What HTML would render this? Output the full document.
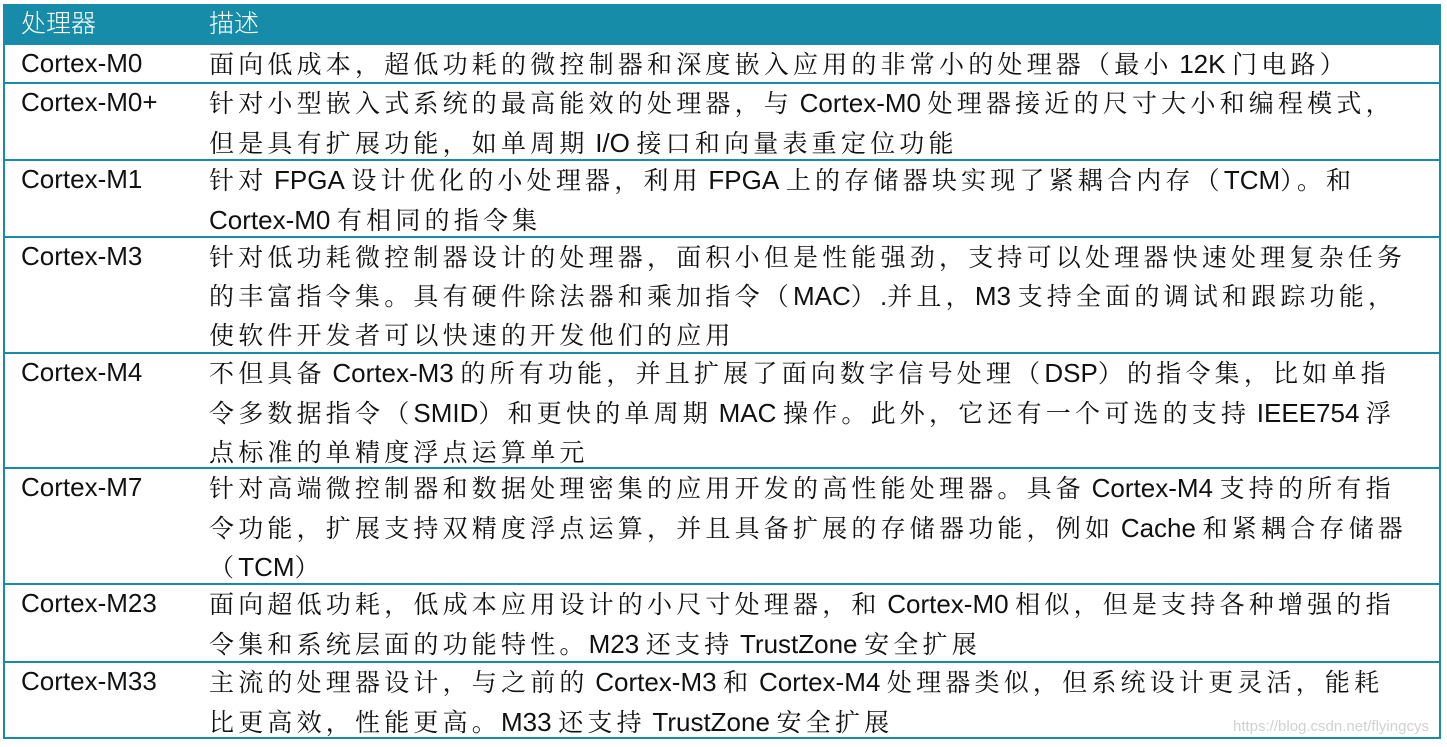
<!DOCTYPE html>
<html><head><meta charset="utf-8"><style>
body{margin:0;width:1447px;height:747px;background:#fff;position:relative;overflow:hidden;font-family:"Liberation Sans","Noto Sans CJK SC",sans-serif;}
.tbl{position:absolute;left:3px;top:4px;width:1434px;height:733px;border:2px solid #1a8aa8;border-top:none;}
.hdr{position:absolute;left:0;top:0;width:1434px;height:40px;background:#178ca9;color:#fff;font-family:"Noto Sans CJK SC",sans-serif;font-size:25px;line-height:40px;font-weight:300}
.hdr span{position:absolute;top:-2px}
.row{position:absolute;left:0;width:1434px;border-top:2px solid #1a8aa8;}
.c1{position:absolute;left:16px;top:-1px;font-size:26px;line-height:38px;color:#111}
.c2{position:absolute;left:204px;top:-1px;font-family:"Noto Serif CJK SC","Liberation Serif",serif;font-size:25px;line-height:38.5px;color:#111;letter-spacing:4.2px;word-spacing:-4px;white-space:nowrap}
.c2 b{font-family:"Liberation Sans",sans-serif;font-weight:normal;letter-spacing:0;font-size:26px}
.wm{position:absolute;left:1233px;top:718px;font-size:15px;color:#d0d0d0;font-family:"Liberation Sans",sans-serif}
</style></head><body>
<div class="tbl">
<div class="hdr"><span style="left:16px">处理器</span><span style="left:204px">描述</span></div>
<div class="row" style="top:39px;height:39px"><div class="c1">Cortex-M0</div><div class="c2">面向低成本，超低功耗的微控制器和深度嵌入应用的非常小的处理器（最小 <b>12K</b> 门电路）</div></div>
<div class="row" style="top:78px;height:76px"><div class="c1">Cortex-M0+</div><div class="c2">针对小型嵌入式系统的最高能效的处理器，与 <b>Cortex-M0</b> 处理器接近的尺寸大小和编程模式，<br>但是具有扩展功能，如单周期 <b>I/O</b> 接口和向量表重定位功能</div></div>
<div class="row" style="top:155px;height:76px"><div class="c1">Cortex-M1</div><div class="c2">针对 <b>FPGA</b> 设计优化的小处理器，利用 <b>FPGA</b> 上的存储器块实现了紧耦合内存（<b>TCM</b>）。和<br><b>Cortex-M0</b> 有相同的指令集</div></div>
<div class="row" style="top:232px;height:114px"><div class="c1">Cortex-M3</div><div class="c2">针对低功耗微控制器设计的处理器，面积小但是性能强劲，支持可以处理器快速处理复杂任务<br>的丰富指令集。具有硬件除法器和乘加指令（<b>MAC</b>）<b>.</b>并且，<b>M3</b> 支持全面的调试和跟踪功能，<br>使软件开发者可以快速的开发他们的应用</div></div>
<div class="row" style="top:348px;height:114px"><div class="c1">Cortex-M4</div><div class="c2">不但具备 <b>Cortex-M3</b> 的所有功能，并且扩展了面向数字信号处理（<b>DSP</b>）的指令集，比如单指<br>令多数据指令（<b>SMID</b>）和更快的单周期 <b>MAC</b> 操作。此外，它还有一个可选的支持 <b>IEEE754</b> 浮<br>点标准的单精度浮点运算单元</div></div>
<div class="row" style="top:463px;height:114px"><div class="c1">Cortex-M7</div><div class="c2">针对高端微控制器和数据处理密集的应用开发的高性能处理器。具备 <b>Cortex-M4</b> 支持的所有指<br>令功能，扩展支持双精度浮点运算，并且具备扩展的存储器功能，例如 <b>Cache</b> 和紧耦合存储器<br>（<b>TCM</b>）</div></div>
<div class="row" style="top:579px;height:76px"><div class="c1">Cortex-M23</div><div class="c2">面向超低功耗，低成本应用设计的小尺寸处理器，和 <b>Cortex-M0</b> 相似，但是支持各种增强的指<br>令集和系统层面的功能特性。<b>M23</b> 还支持 <b>TrustZone</b> 安全扩展</div></div>
<div class="row" style="top:657px;height:76px"><div class="c1">Cortex-M33</div><div class="c2">主流的处理器设计，与之前的 <b>Cortex-M3</b> 和 <b>Cortex-M4</b> 处理器类似，但系统设计更灵活，能耗<br>比更高效，性能更高。<b>M33</b> 还支持 <b>TrustZone</b> 安全扩展</div></div>
</div>
<div class="wm">https://blog.csdn.net/flyingcys</div>
</body></html>
